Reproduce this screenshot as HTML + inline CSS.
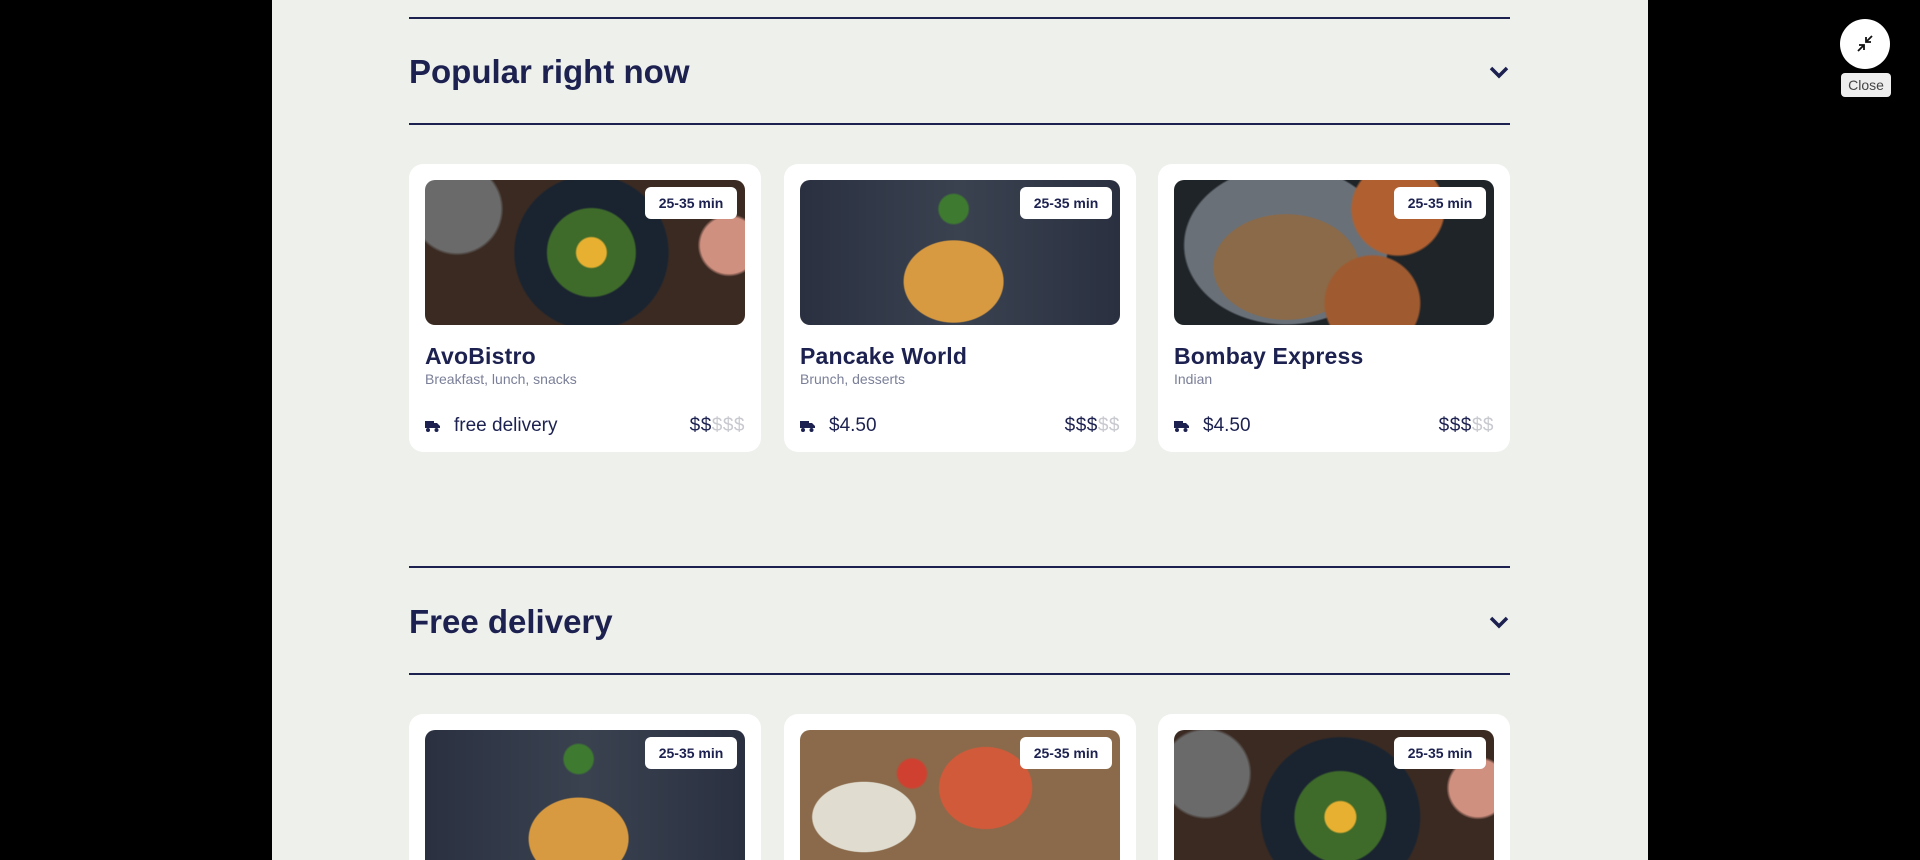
<!DOCTYPE html>
<html><head><meta charset="utf-8"><style>
*{box-sizing:border-box;margin:0;padding:0}
html,body{width:1920px;height:860px;overflow:hidden}
body{background:#000;font-family:"Liberation Sans",sans-serif;color:#1c2150;position:relative}
.wrap{position:absolute;left:0;top:0;width:1920px;height:860px;overflow:hidden}
.panel{position:absolute;left:272px;top:0;width:1376px;height:860px;background:#eef0eb}
.line{position:absolute;left:409px;width:1101px;height:2px;background:#1c2150}
.h{position:absolute;left:409px;font-size:33px;font-weight:bold;letter-spacing:0}
.chev{position:absolute;left:1488px;width:22px;height:14px}
.card{position:absolute;width:352px;height:288px;background:#fff;border-radius:14px}
.img{position:absolute;left:16px;top:16px;width:320px;height:145px;border-radius:10px;overflow:hidden}
.badge{position:absolute;right:8px;top:7px;width:92px;height:32px;background:#fff;border-radius:6px;font-size:14px;line-height:32px;text-align:center;color:#1c2150;font-weight:bold}
.t{position:absolute;left:16px;top:179px;font-size:23px;font-weight:bold;letter-spacing:0.2px}
.s{position:absolute;left:16px;top:207px;font-size:14px;color:#7a7f98}
.b{position:absolute;left:16px;top:251px;font-size:19px;display:flex;align-items:center}
.b svg{margin-right:14px}
.p{position:absolute;right:16px;top:251px;font-size:19px;letter-spacing:0.5px}
.p span{color:#c8c9cf}
</style></head><body><div class="wrap">
<div class="panel"></div>
<div class="line" style="top:17px"></div>
<div class="h" style="top:53px">Popular right now</div>
<svg class="chev" style="top:65px" viewBox="0 0 22 14"><path d="M3 3l8 8 8-8" stroke="#1c2150" stroke-width="3.5" fill="none"/></svg>
<div class="line" style="top:123px"></div>

<div class="card" style="left:409px;top:164px">
<div class="img" style="background:radial-gradient(circle at 52% 50%,#e8b030 0 8%,#3e6a2a 9% 24%,#1a2430 25% 42%,transparent 43%),radial-gradient(circle at 10% 20%,#6a6a6a 0 14%,transparent 15%),radial-gradient(circle at 95% 45%,#d09080 0 9%,transparent 10%),#3a2a22"><div class="badge">25-35 min</div></div>
<div class="t">AvoBistro</div><div class="s">Breakfast, lunch, snacks</div>
<div class="b"><svg width="15" height="12" viewBox="0 0 15 12"><path d="M0 1h9v7H0zM9 3h3l3 3v2H9z" fill="#1c2150"/><circle cx="3" cy="10" r="2" fill="#1c2150"/><circle cx="11.5" cy="10" r="2" fill="#1c2150"/></svg>free delivery</div>
<div class="p">$$<span>$$$</span></div></div>

<div class="card" style="left:784px;top:164px">
<div class="img" style="background:radial-gradient(ellipse 22% 40% at 48% 70%,#d89a40 0 70%,transparent 72%),radial-gradient(circle at 48% 20%,#3e7a30 0 7%,transparent 8%),linear-gradient(90deg,#2a3040,#3a4250 50%,#2a3040)"><div class="badge">25-35 min</div></div>
<div class="t">Pancake World</div><div class="s">Brunch, desserts</div>
<div class="b"><svg width="15" height="12" viewBox="0 0 15 12"><path d="M0 1h9v7H0zM9 3h3l3 3v2H9z" fill="#1c2150"/><circle cx="3" cy="10" r="2" fill="#1c2150"/><circle cx="11.5" cy="10" r="2" fill="#1c2150"/></svg>$4.50</div>
<div class="p">$$$<span>$$</span></div></div>

<div class="card" style="left:1158px;top:164px">
<div class="img" style="background:radial-gradient(circle at 70% 20%,#b06030 0 18%,transparent 19%),radial-gradient(circle at 62% 85%,#a05a30 0 20%,transparent 21%),radial-gradient(ellipse 25% 40% at 35% 60%,#8a6a48 0 90%,transparent 92%),radial-gradient(ellipse 35% 60% at 35% 45%,#6a7078 0 90%,transparent 92%),#1e2428"><div class="badge">25-35 min</div></div>
<div class="t">Bombay Express</div><div class="s">Indian</div>
<div class="b"><svg width="15" height="12" viewBox="0 0 15 12"><path d="M0 1h9v7H0zM9 3h3l3 3v2H9z" fill="#1c2150"/><circle cx="3" cy="10" r="2" fill="#1c2150"/><circle cx="11.5" cy="10" r="2" fill="#1c2150"/></svg>$4.50</div>
<div class="p">$$$<span>$$</span></div></div>

<div class="line" style="top:566px"></div>
<div class="h" style="top:603px">Free delivery</div>
<svg class="chev" style="top:615px" viewBox="0 0 22 14"><path d="M3 3l8 8 8-8" stroke="#1c2150" stroke-width="3.5" fill="none"/></svg>
<div class="line" style="top:673px"></div>

<div class="card" style="left:409px;top:714px;height:160px">
<div class="img" style="background:radial-gradient(ellipse 22% 40% at 48% 75%,#d89a40 0 70%,transparent 72%),radial-gradient(circle at 48% 20%,#3e7a30 0 7%,transparent 8%),linear-gradient(90deg,#2a3040,#3a4250 50%,#2a3040)"><div class="badge">25-35 min</div></div></div>
<div class="card" style="left:784px;top:714px;height:160px">
<div class="img" style="background:radial-gradient(ellipse 20% 30% at 20% 60%,#e0dcd0 0 80%,transparent 82%),radial-gradient(ellipse 18% 35% at 58% 40%,#d05a3a 0 80%,transparent 82%),radial-gradient(circle at 35% 30%,#d04030 0 6%,transparent 7%),#8a6a4a"><div class="badge">25-35 min</div></div></div>
<div class="card" style="left:1158px;top:714px;height:160px">
<div class="img" style="background:radial-gradient(circle at 52% 60%,#e8b030 0 8%,#3e6a2a 9% 24%,#1a2430 25% 42%,transparent 43%),radial-gradient(circle at 10% 30%,#6a6a6a 0 14%,transparent 15%),radial-gradient(circle at 95% 40%,#d09080 0 9%,transparent 10%),#3a2a22"><div class="badge">25-35 min</div></div></div>

<div style="position:absolute;left:1840px;top:19px;width:50px;height:50px;border-radius:50%;background:#fff"><svg width="50" height="50" viewBox="0 0 50 50"><path d="M32 17l-6 6M26 18v5h5M18 32l6-6M19 26h5v5" stroke="#111" stroke-width="1.8" fill="none"/></svg></div>
<div style="position:absolute;left:1841px;top:73px;width:50px;height:24px;border-radius:4px;background:#eee;font-size:14px;line-height:24px;text-align:center;color:#444">Close</div>
</div></body></html>
